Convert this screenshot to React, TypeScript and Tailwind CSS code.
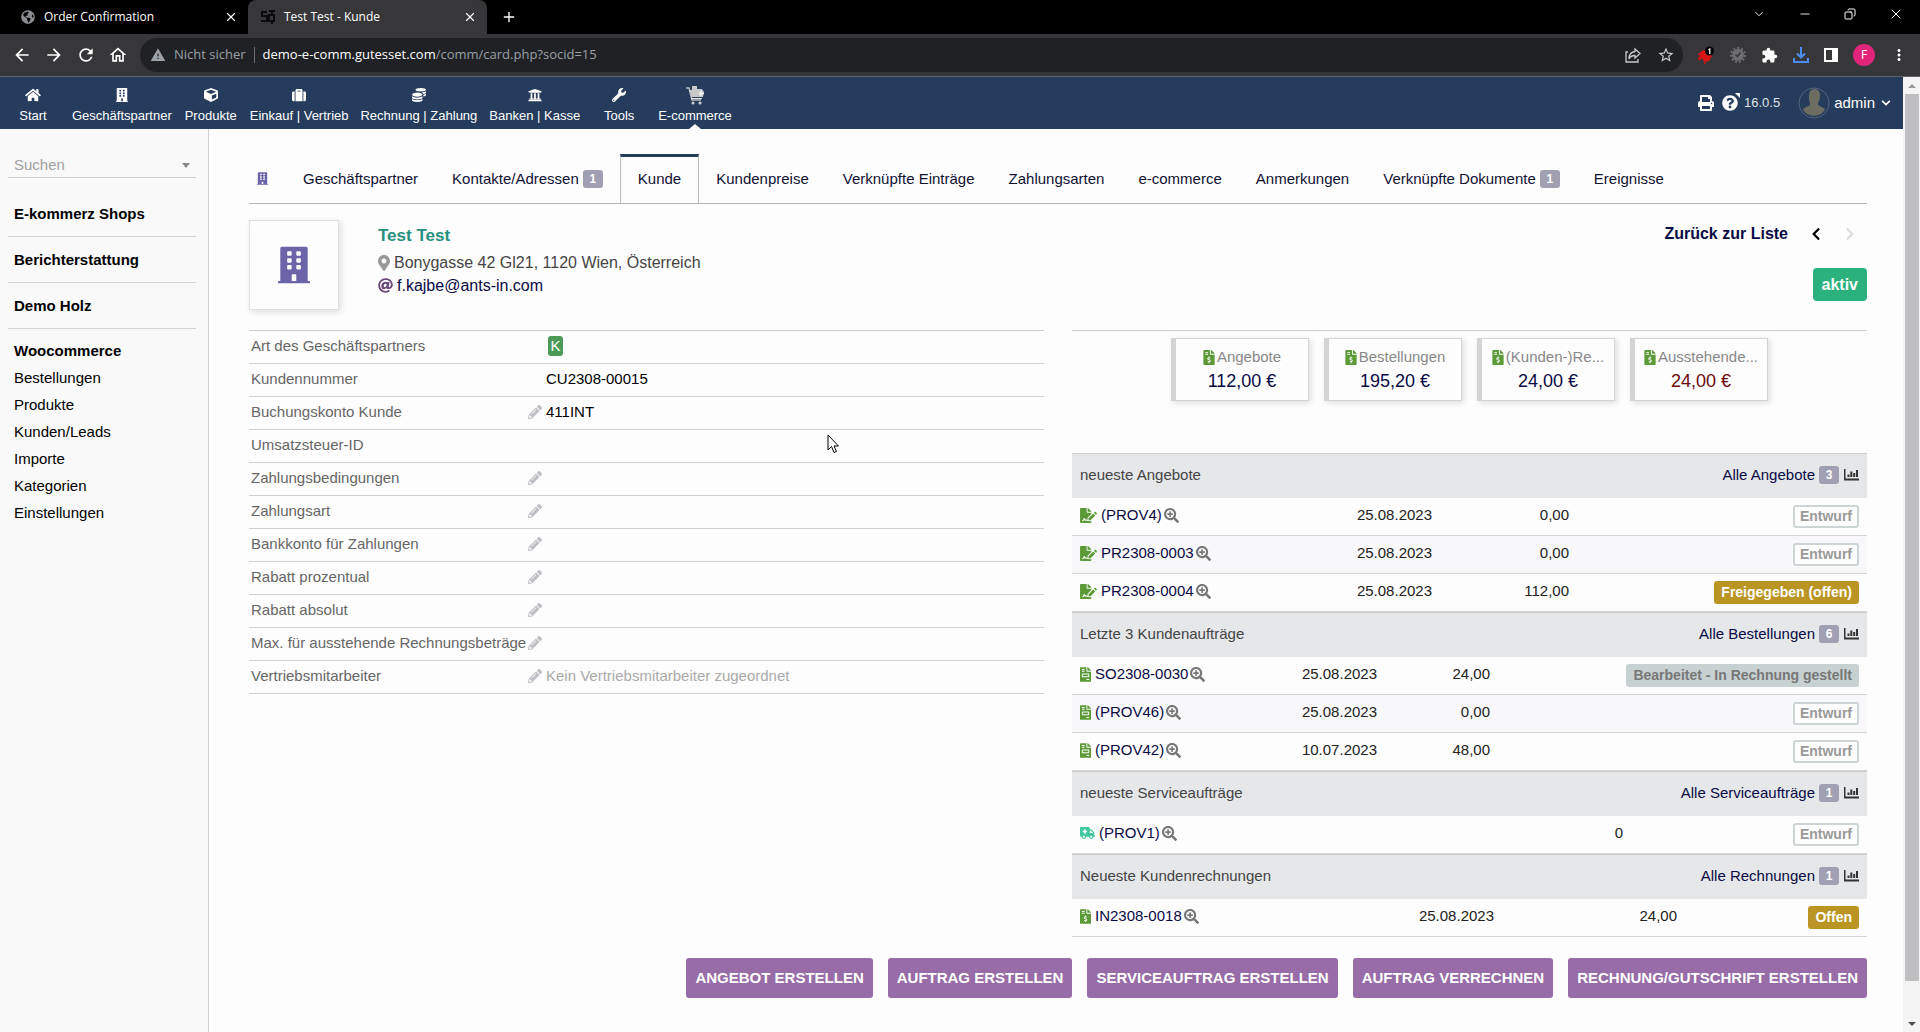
import type { ReactNode } from 'react';
import type { IconType } from 'react-icons';
import {
  FaAmbulance, FaAt, FaBuilding, FaChevronDown, FaChevronLeft, FaChevronRight, FaCoins, FaCube,
  FaFileInvoice, FaFileInvoiceDollar, FaFileSignature, FaGlobeAmericas, FaHome, FaMapMarkerAlt,
  FaPencilAlt, FaPrint, FaQuestionCircle, FaSearchPlus, FaSuitcase, FaUniversity, FaWrench,
} from 'react-icons/fa';
import { MdArrowBack, MdArrowForward, MdExtension, MdMoreVert, MdOutlineHome, MdRefresh, MdStarBorder, MdWarning } from 'react-icons/md';
import { ChevronDown, Copy, Minus, Plus, X } from 'lucide-react';

interface DocRow {
  name: string;
  date?: string;
  amount: string;
  status: string;
  kind: 'draft' | 'open' | 'closed';
}

interface DocBox {
  title: string;
  all: string;
  count: number;
  icon: IconType;
  iconClass: string;
  dateCol: string;
  amountCol: string;
  rows: DocRow[];
}

const topMenu: { label: string; icon?: IconType }[] = [
  { label: 'Start', icon: FaHome },
  { label: 'Geschäftspartner', icon: FaBuilding },
  { label: 'Produkte', icon: FaCube },
  { label: 'Einkauf | Vertrieb', icon: FaSuitcase },
  { label: 'Rechnung | Zahlung', icon: FaCoins },
  { label: 'Banken | Kasse', icon: FaUniversity },
  { label: 'Tools', icon: FaWrench },
  { label: 'E-commerce' },
];

const tabs: { label: string; count?: number; active?: boolean }[] = [
  { label: 'Geschäftspartner' },
  { label: 'Kontakte/Adressen', count: 1 },
  { label: 'Kunde', active: true },
  { label: 'Kundenpreise' },
  { label: 'Verknüpfte Einträge' },
  { label: 'Zahlungsarten' },
  { label: 'e-commerce' },
  { label: 'Anmerkungen' },
  { label: 'Verknüpfte Dokumente', count: 1 },
  { label: 'Ereignisse' },
];

const sections = ['E-kommerz Shops', 'Berichterstattung', 'Demo Holz'];
const shopLinks = ['Bestellungen', 'Produkte', 'Kunden/Leads', 'Importe', 'Kategorien', 'Einstellungen'];

const fields: { label: string; edit?: boolean; value?: ReactNode }[] = [
  {
    label: 'Art des Geschäftspartners',
    value: <span className="ml-0.5 inline-block h-5 w-[15px] rounded-[3px] bg-[#4c9a58] text-center leading-5 text-white">K</span>,
  },
  { label: 'Kundennummer', value: 'CU2308-00015' },
  { label: 'Buchungskonto Kunde', edit: true, value: '411INT' },
  { label: 'Umsatzsteuer-ID' },
  { label: 'Zahlungsbedingungen', edit: true },
  { label: 'Zahlungsart', edit: true },
  { label: 'Bankkonto für Zahlungen', edit: true },
  { label: 'Rabatt prozentual', edit: true },
  { label: 'Rabatt absolut', edit: true },
  { label: 'Max. für ausstehende Rechnungsbeträge', edit: true },
  { label: 'Vertriebsmitarbeiter', edit: true, value: <span className="text-[#aaaaaa]">Kein Vertriebsmitarbeiter zugeordnet</span> },
];

const totals = [
  { label: 'Angebote', value: '112,00 €' },
  { label: 'Bestellungen', value: '195,20 €' },
  { label: '(Kunden-)Re...', value: '24,00 €' },
  { label: 'Ausstehende...', value: '24,00 €', late: true },
];

const boxes: DocBox[] = [
  {
    title: 'neueste Angebote', all: 'Alle Angebote', count: 3,
    icon: FaFileSignature, iconClass: 'h-[15px] w-[17px] text-[#5c9a38]',
    dateCol: 'w-[368px]', amountCol: 'w-[137px]',
    rows: [
      { name: '(PROV4)', date: '25.08.2023', amount: '0,00', status: 'Entwurf', kind: 'draft' },
      { name: 'PR2308-0003', date: '25.08.2023', amount: '0,00', status: 'Entwurf', kind: 'draft' },
      { name: 'PR2308-0004', date: '25.08.2023', amount: '112,00', status: 'Freigegeben (offen)', kind: 'open' },
    ],
  },
  {
    title: 'Letzte 3 Kundenaufträge', all: 'Alle Bestellungen', count: 6,
    icon: FaFileInvoice, iconClass: 'h-[15px] w-[11px] text-[#5c9a38]',
    dateCol: 'w-[313px]', amountCol: 'w-[113px]',
    rows: [
      { name: 'SO2308-0030', date: '25.08.2023', amount: '24,00', status: 'Bearbeitet - In Rechnung gestellt', kind: 'closed' },
      { name: '(PROV46)', date: '25.08.2023', amount: '0,00', status: 'Entwurf', kind: 'draft' },
      { name: '(PROV42)', date: '10.07.2023', amount: '48,00', status: 'Entwurf', kind: 'draft' },
    ],
  },
  {
    title: 'neueste Serviceaufträge', all: 'Alle Serviceaufträge', count: 1,
    icon: FaAmbulance, iconClass: 'h-3 w-[15px] text-[#3fc8a0]',
    dateCol: 'w-[368px]', amountCol: 'w-[191px]',
    rows: [{ name: '(PROV1)', amount: '0', status: 'Entwurf', kind: 'draft' }],
  },
  {
    title: 'Neueste Kundenrechnungen', all: 'Alle Rechnungen', count: 1,
    icon: FaFileInvoiceDollar, iconClass: 'h-[15px] w-[11px] text-[#5c9a38]',
    dateCol: 'w-[430px]', amountCol: 'w-[183px]',
    rows: [{ name: 'IN2308-0018', date: '25.08.2023', amount: '24,00', status: 'Offen', kind: 'open' }],
  },
];

const actions = ['Angebot erstellen', 'Auftrag erstellen', 'Serviceauftrag erstellen', 'Auftrag verrechnen', 'Rechnung/Gutschrift erstellen'];

const statusClass = {
  draft: 'border-[#ccd4d4] bg-[#fdfdfd] text-[#999999]',
  open: 'border-[#bb9524] bg-[#bb9524] text-white',
  closed: 'border-[#c8d1d1] bg-[#c8d1d1] text-[#777777]',
};

const Count = ({ n }: { n: number }) => (
  <span className="inline-block h-[18px] min-w-5 rounded-[3px] bg-[#a0a0b2] px-1.5 text-center text-xs leading-[18px] font-bold text-white">{n}</span>
);

const CartIcon = () => (
  <svg className="h-5 w-5" viewBox="0 0 20 20">
    <path d="M1 3h3l3 12h9" fill="none" stroke="#bdbdbd" strokeWidth="1.5" />
    <path d="M4 5h3V1h5v3h5l2 3-1 5H6.500z" fill="#c9c9c9" />
    <path d="M16 6v5M14 8.500h5" stroke="#f4f4f4" strokeWidth="1.500" />
    <path d="M6 13.500h11" stroke="#e5e5e5" />
    <circle cx="8" cy="18" r="1.500" fill="#d0d0d0" />
    <circle cx="15" cy="18" r="1.500" fill="#d0d0d0" />
  </svg>
);

const StatsIcon = () => (
  <svg className="ml-px h-3 w-[15px]" viewBox="0 0 15 12" fill="#333333">
    <path d="M0 0h1.500v9.500H15V11.500H0zM3.500 5.500h2V8h-2zM6.300 2.500h2V8h-2zM9.200 4h2v4h-2zM12 1h2v7h-2z" />
  </svg>
);

const BrowserBar = () => (
  <header className="font-['Open_Sans','Noto_Sans',sans-serif] text-white">
    <div className="flex h-[34px] items-end justify-between bg-black">
      <div className="flex h-full items-center">
        <div className="flex h-full w-[248px] items-center pr-2.5 pl-5">
          <FaGlobeAmericas className="h-3.5 w-4 text-[#8a8d91]" />
          <span className="ml-2 flex-1 text-xs">Order Confirmation</span>
          <button aria-label="Tab schließen"><X className="h-3.5 w-3.5" /></button>
        </div>
        <div className="flex h-full w-[239px] items-center rounded-t-lg bg-[#37373a] pr-2.5 pl-3">
          <svg className="h-4 w-4" viewBox="0 0 16 16" fill="none" stroke="#0b0b0d" strokeWidth="2">
            <path d="M7 3H2v4h5v5H1M9 2h6M12 2v4M9 6h5v6H9zM12 12v3" />
          </svg>
          <span className="ml-2 flex-1 text-xs">Test Test - Kunde</span>
          <button aria-label="Tab schließen"><X className="h-3.5 w-3.5" /></button>
        </div>
        <button className="ml-3.5" aria-label="Neuer Tab"><Plus className="h-4 w-4" /></button>
      </div>
      <div className="flex h-full items-center gap-8 pr-4 pb-1.5">
        <button aria-label="Tabs suchen"><ChevronDown className="h-3.5 w-3.5" strokeWidth={1.5} /></button>
        <button aria-label="Minimieren"><Minus className="h-3.5 w-3.5" strokeWidth={1.5} /></button>
        <button aria-label="Wiederherstellen"><Copy className="h-3 w-3 -scale-x-100" strokeWidth={2} /></button>
        <button aria-label="Schließen"><X className="h-4 w-4" strokeWidth={1.5} /></button>
      </div>
    </div>
    <div className="flex h-[43px] items-center border-b border-[#5f6368] bg-[#37373a] pr-3.5 pl-3">
      <div className="flex items-center gap-3">
        <button aria-label="Zurück"><MdArrowBack className="h-5 w-5" /></button>
        <button aria-label="Vorwärts"><MdArrowForward className="h-5 w-5" /></button>
        <button aria-label="Neu laden"><MdRefresh className="h-5 w-5" /></button>
        <button aria-label="Startseite"><MdOutlineHome className="h-5 w-5" /></button>
      </div>
      <div className="mr-3.5 ml-3 flex h-[34px] flex-1 items-center rounded-full bg-[#202124] pr-2 pl-2.5 text-[13px] text-[#9aa0a6]">
        <MdWarning className="h-4 w-4" />
        <span className="ml-2">Nicht sicher</span>
        <span className="mx-2 h-4 w-px bg-[#6b6f74]" />
        <span className="flex-1" role="textbox" aria-label="Adresse"><span className="text-white">demo-e-comm.gutesset.com</span>/comm/card.php?socid=15</span>
        <div className="flex gap-4 text-[#c7c9cc]">
          <button aria-label="Teilen">
            <svg className="h-4 w-4" viewBox="0 0 16 16" fill="none" stroke="currentColor" strokeWidth="1.300">
              <path d="M3 5H1v10h12v-3" />
              <path d="M10 2l5 4.500-5 4.500V8.500C7 8.500 5 9.500 4 12c0-4 2-7 6-7.500z" />
            </svg>
          </button>
          <button aria-label="Lesezeichen"><MdStarBorder className="h-[18px] w-[18px]" /></button>
        </div>
      </div>
      <div className="flex items-center gap-[15px]">
        <svg className="h-[18px] w-[18px]" viewBox="0 0 18 18">
          <path d="M2 8l4-4 5 1 4 5-3 5-5 1-2-4-5 1 3-3z" fill="#d81414" />
          <path d="M8 16v2M2 14l3-3M1 8h5" stroke="#d81414" strokeWidth="1.500" />
          <circle cx="12.500" cy="5" r="4.500" fill="#000" />
          <path d="M11.500 4l1.300-1v5" fill="none" stroke="#fff" strokeWidth="1.200" />
        </svg>
        <svg className="h-4 w-4" viewBox="0 0 16 16">
          <circle cx="8" cy="8" r="6" fill="#6e6e70" />
          <circle cx="8" cy="8" r="7" fill="none" stroke="#6e6e70" strokeWidth="2" strokeDasharray="2 2" />
          <path d="M5.500 7.500l2 2 3-4" fill="none" stroke="#37373a" strokeWidth="1.500" />
        </svg>
        <MdExtension className="h-[17px] w-[17px]" />
        <svg className="h-4 w-4" viewBox="0 0 16 16" fill="none" stroke="#4c8df5" strokeWidth="2">
          <path d="M8 0v10M4 6.500l4 4 4-4M1 11v4h14v-4" />
        </svg>
        <svg className="h-3.5 w-3.5" viewBox="0 0 14 14">
          <path d="M0 0h14v14H0zM2 2v10h6V2z" fill="#fff" fillRule="evenodd" />
        </svg>
        <span className="flex h-[22px] w-[22px] items-center justify-center rounded-full bg-[#e0257a] text-xs">F</span>
        <button aria-label="Menü"><MdMoreVert className="-mr-0.5 h-[18px] w-[18px]" /></button>
      </div>
    </div>
  </header>
);

const TopMenu = () => (
  <nav className="flex h-[52px] items-stretch justify-between bg-[#263c5c] pr-3 text-white">
    <div className="flex">
      {topMenu.map((item) => (
        <a key={item.label} href="#" className="relative flex min-w-[66px] flex-col items-center px-1.5 text-[13px] leading-4">
          <span className="flex h-[31px] items-center pt-1">
            {item.icon ? <item.icon className="h-3.5 w-4" /> : <CartIcon />}
          </span>
          {item.label}
          {!item.icon && <span className="absolute bottom-0 border-x-[6px] border-b-[5px] border-x-transparent border-b-[#fdfdfd]" />}
        </a>
      ))}
    </div>
    <div className="flex items-center">
      <button aria-label="Drucken"><FaPrint className="h-4 w-4" /></button>
      <button className="relative ml-2" aria-label="Hilfe">
        <FaQuestionCircle className="h-4 w-4" />
        <svg className="absolute -top-0.5 -right-0.5 h-1.5 w-1.5" viewBox="0 0 6 6"><path d="M1 0h5v5z" fill="#fff" /></svg>
      </button>
      <span className="ml-1.5 text-[13px] text-[#dfe3e8]">16.0.5</span>
      <svg className="ml-[18px] h-8 w-8" viewBox="0 0 32 32">
        <circle cx="16" cy="16" r="15" fill="#263c5c" stroke="#56657c" />
        <path d="M11 8c0-8 11-8 11 0 0 4-1 7-2 8v2l7 4c-3 9-19 9-22 0l7-4v-2c-1-1-1-4-1-8z" fill="#6d6c60" />
      </svg>
      <button className="ml-1 flex items-center gap-1.5 text-[15px]">admin <FaChevronDown className="h-2.5 w-2.5" /></button>
    </div>
  </nav>
);

const Sidebar = () => (
  <aside className="w-[209px] shrink-0 border-r border-[#d0d0d0] bg-[#f9f9fa] pt-6 pr-3 pl-2 text-[15px] text-black">
    <div className="relative border-b border-[#cfcfcf]">
      <label htmlFor="search" className="sr-only">Suchen</label>
      <select id="search" defaultValue="" className="block h-6 w-full appearance-none bg-transparent pl-1.5 leading-5 text-[#a0a0a0] outline-none">
        <option value="">Suchen</option>
      </select>
      <span className="pointer-events-none absolute top-2.5 right-1.5 border-x-4 border-t-[5px] border-x-transparent border-t-[#888888]" />
    </div>
    <div className="pt-[13px]">
      {sections.map((s) => (
        <div key={s} className="border-b border-[#d3d3d3] px-1.5 py-3">
          <a href="#" className="block leading-[21px] font-bold">{s}</a>
        </div>
      ))}
      <div className="px-1.5 pt-[11px]">
        <a href="#" className="block leading-[21px] font-bold">Woocommerce</a>
        <ul className="pt-[3px]">
          {shopLinks.map((l) => (
            <li key={l} className="leading-[27px]"><a href="#">{l}</a></li>
          ))}
        </ul>
      </div>
    </div>
  </aside>
);

const Tabs = () => (
  <div className="flex h-[50px] items-stretch border-b border-[#b4b4b4] text-[15px] whitespace-nowrap">
    <span className="flex items-center pr-[18px] pl-2"><FaBuilding className="h-[15px] w-[11px] text-[#6c64a8]" /></span>
    {tabs.map((t) => (
      <a
        key={t.label}
        href="#"
        className={`flex items-center gap-1 text-[#111133] ${t.active ? 'border-x border-t-[3px] border-x-[#bbbbbb] border-t-[#263c5c] px-[17px] pb-0.5' : 'px-[17px] pt-px'}`}
      >
        {t.label}
        {t.count && <Count n={t.count} />}
      </a>
    ))}
  </div>
);

const Banner = () => (
  <div className="mt-4 flex">
    <div className="flex h-[90px] w-[90px] items-center justify-center border border-[#e0e0e0] bg-[#fdfdfd] shadow-[2px_2px_6px_#dddddd]">
      <FaBuilding className="h-[38px] w-8 text-[#6c64a8]" />
    </div>
    <div className="ml-[39px] flex-1 pt-[5px] text-base leading-[23px] text-[#444444]">
      <h1 className="text-[17px] leading-[22px] font-bold text-[#26907f]">Test Test</h1>
      <p className="mt-1 flex items-center gap-1"><FaMapMarkerAlt className="h-4 w-3 text-[#999999]" />Bonygasse 42 Gl21, 1120 Wien, Österreich</p>
      <p className="flex items-center gap-1"><FaAt className="h-[15px] w-[15px] text-[#6c4a7c]" /><a href="#" className="text-[#0a0a46]">f.kajbe@ants-in.com</a></p>
    </div>
    <div className="flex flex-col items-end">
      <div className="flex items-center pt-0.5 pr-3 text-base leading-6 font-bold text-[#0a0a46]">
        <a href="#">Zurück zur Liste</a>
        <a href="#" className="ml-[23px]" aria-label="Zurück"><FaChevronLeft className="h-3.5 w-2.5 text-black" /></a>
        <FaChevronRight className="ml-6 h-3.5 w-2.5 text-[#dddddd]" />
      </div>
      <span className="mt-[22px] rounded bg-[#2bb17e] px-[9px] text-base leading-[33px] font-bold text-white">aktiv</span>
    </div>
  </div>
);

const Details = () => (
  <div className="min-w-0 flex-1">
    <table className="w-full border-t border-[#cccccc] text-[15px]">
      <tbody>
        {fields.map((f) => (
          <tr key={f.label} className="h-[33px] border-b border-[#d0d0d0]">
            <th scope="row" className="w-[297px] p-0 pb-0.5 pl-0.5 text-left font-normal whitespace-nowrap text-[#666666]">
              <div className="flex items-center justify-between pr-1">
                {f.label}
                {f.edit && <button aria-label="Bearbeiten"><FaPencilAlt className="h-3.5 w-3.5 text-[#bebec4]" /></button>}
              </div>
            </th>
            <td className="p-0 pb-0.5 text-black">{f.value}</td>
          </tr>
        ))}
      </tbody>
    </table>
  </div>
);

const Totals = () => (
  <div className="flex justify-center gap-[15px] border-t border-[#cccccc] pt-[7px]">
    {totals.map((t) => (
      <a key={t.label} href="#" className="block h-[63px] w-[138px] border border-l-[5px] border-[#d4d4d4] px-1 pt-1.5 text-center shadow-[2px_2px_6px_#dddddd]">
        <span className="flex items-center justify-center gap-0.5 text-[15px] leading-6 text-[#888888]">
          <FaFileInvoiceDollar className="h-[15px] w-3 shrink-0 text-[#5c9a38]" />
          {t.label}
        </span>
        <span className={`block text-lg leading-6 ${t.late ? 'text-[#6e0a0a]' : 'text-[#0a0a46]'}`}>{t.value}</span>
      </a>
    ))}
  </div>
);

const DocTable = ({ box }: { box: DocBox }) => (
  <table className="w-full table-fixed text-[15px] text-[#222222]">
    <colgroup>
      <col className={box.dateCol} />
      <col className={box.amountCol} />
      <col />
    </colgroup>
    <thead>
      <tr className="h-11 border-t border-[#cccccc] bg-[#e5e7e9]">
        <th className="px-2 pt-0 pb-0.5 text-left font-normal text-[#444444]">{box.title}</th>
        <th colSpan={2} className="px-2 pt-0 pb-0.5 font-normal">
          <span className="flex items-center justify-end gap-1">
            <a href="#" className="text-[#0a0a46]">{box.all}</a>
            <Count n={box.count} />
            <StatsIcon />
          </span>
        </th>
      </tr>
    </thead>
    <tbody>
      {box.rows.map((r) => (
        <tr key={r.name} className="h-[38px] border-b border-[#d4d4d4] even:bg-[#f8f8fa]">
          <td className="px-2 pt-0 pb-0.5">
            <span className="flex items-center justify-between">
              <a href="#" className="flex items-center text-[#0a0a46]">
                <box.icon className={`mr-1 ${box.iconClass}`} />
                {r.name}
                <FaSearchPlus className="ml-0.5 h-[15px] w-[15px] text-[#777777]" />
              </a>
              {r.date}
            </span>
          </td>
          <td className="px-2 pt-0 pb-0.5 text-right">{r.amount}</td>
          <td className="px-2 py-0">
            <span className="flex justify-end">
              <span className={`rounded-[3px] border-2 px-[5px] text-sm leading-[19px] font-bold ${statusClass[r.kind]}`}>{r.status}</span>
            </span>
          </td>
        </tr>
      ))}
    </tbody>
  </table>
);

const ScrollBar = () => (
  <div className="flex w-[17px] shrink-0 flex-col items-center bg-[#f4f4f4]">
    <span className="flex h-[17px] items-center"><span className="border-x-4 border-b-4 border-x-transparent border-b-[#999999]" /></span>
    <span className="w-3.5 flex-1 bg-[#bfbfc2]" />
    <span className="flex h-[51px] items-end pb-1.5"><span className="border-x-4 border-t-4 border-x-transparent border-t-[#505050]" /></span>
  </div>
);

const MouseCursor = () => (
  <svg className="absolute top-[434px] left-[827px] h-5 w-3" viewBox="0 0 12 20">
    <path d="M1 1v15l3.500-3.500L7 18.500l2.500-1L7 12h4.500z" fill="#fff" stroke="#000" />
  </svg>
);

export default function App() {
  return (
    <div className="relative flex min-h-screen flex-col bg-[#fdfdfd] font-['Liberation_Sans',Arial,sans-serif]">
      <BrowserBar />
      <div className="flex flex-1">
        <div className="flex min-w-0 flex-1 flex-col">
          <TopMenu />
          <div className="flex flex-1">
            <Sidebar />
            <main className="min-w-0 flex-1 pt-[25px] pr-9 pl-10">
              <Tabs />
              <Banner />
              <div className="mt-5 flex gap-7">
                <Details />
                <div className="min-w-0 flex-1">
                  <Totals />
                  <div className="mt-[52px]">
                    {boxes.map((b) => <DocTable key={b.title} box={b} />)}
                  </div>
                </div>
              </div>
              <div className="mt-[21px] flex justify-end gap-[15px]">
                {actions.map((a) => (
                  <button key={a} className="h-10 rounded-[3px] bg-[#986ca6] px-[9px] text-[15px] font-bold whitespace-nowrap text-white uppercase">{a}</button>
                ))}
              </div>
            </main>
          </div>
        </div>
        <ScrollBar />
      </div>
      <MouseCursor />
    </div>
  );
}
